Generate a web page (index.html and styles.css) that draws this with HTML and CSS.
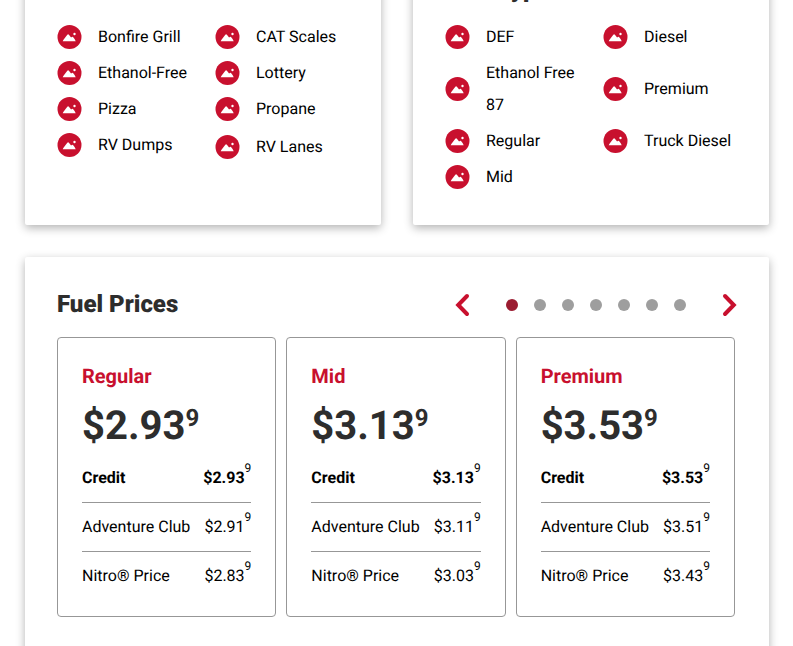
FILE: index.html
```html
<!DOCTYPE html>
<html lang="en">
<head>
<meta charset="utf-8">
<title>Fuel Prices</title>
<link rel="stylesheet" href="styles.css">
</head>
<body>
<svg class="sprite" aria-hidden="true">
  <symbol id="pic" viewBox="0 0 24 24">
    <circle cx="12" cy="12" r="12" fill="#c8102e"/>
    <path d="M5.2 16.2 Q5.4 15.4 6.2 14.4 L9.8 9.7 Q10.6 8.9 11.4 9.7 L13.6 12.6 L14.3 11.9 Q14.9 11.4 15.5 12 Q17.4 14 18.2 16.2 Z" fill="#fff"/>
    <circle cx="17" cy="9" r="1.2" fill="#fff"/>
  </symbol>
</svg>
<main class="page">
  <div class="pair">
    <section class="card card-top">
      <ul class="features">
        <li><svg class="icon"><use href="#pic"/></svg><span>Bonfire Grill</span></li>
        <li><svg class="icon"><use href="#pic"/></svg><span>CAT Scales</span></li>
        <li><svg class="icon"><use href="#pic"/></svg><span>Ethanol-Free</span></li>
        <li><svg class="icon"><use href="#pic"/></svg><span>Lottery</span></li>
        <li><svg class="icon"><use href="#pic"/></svg><span>Pizza</span></li>
        <li><svg class="icon"><use href="#pic"/></svg><span>Propane</span></li>
        <li><svg class="icon"><use href="#pic"/></svg><span>RV Dumps</span></li>
        <li><svg class="icon"><use href="#pic"/></svg><span>RV Lanes</span></li>
      </ul>
    </section>
    <section class="card card-top">
      <h2 class="title">Fuel Types</h2>
      <ul class="features">
        <li><svg class="icon"><use href="#pic"/></svg><span>DEF</span></li>
        <li><svg class="icon"><use href="#pic"/></svg><span>Diesel</span></li>
        <li><svg class="icon"><use href="#pic"/></svg><span>Ethanol Free 87</span></li>
        <li><svg class="icon"><use href="#pic"/></svg><span>Premium</span></li>
        <li><svg class="icon"><use href="#pic"/></svg><span>Regular</span></li>
        <li><svg class="icon"><use href="#pic"/></svg><span>Truck Diesel</span></li>
        <li><svg class="icon"><use href="#pic"/></svg><span>Mid</span></li>
      </ul>
    </section>
  </div>

  <section class="card prices">
    <header class="prices-head">
      <h2 class="title">Fuel Prices</h2>
      <nav class="pager" aria-label="Fuel prices">
        <button class="arrow" type="button" aria-label="Previous"><svg viewBox="0 0 14 24"><path d="M11.5 3 L2.7 12 L11.5 21"/></svg></button>
        <div class="dots">
          <button class="dot active" type="button" aria-label="Slide 1"></button>
          <button class="dot" type="button" aria-label="Slide 2"></button>
          <button class="dot" type="button" aria-label="Slide 3"></button>
          <button class="dot" type="button" aria-label="Slide 4"></button>
          <button class="dot" type="button" aria-label="Slide 5"></button>
          <button class="dot" type="button" aria-label="Slide 6"></button>
          <button class="dot" type="button" aria-label="Slide 7"></button>
        </div>
        <button class="arrow" type="button" aria-label="Next"><svg viewBox="0 0 14 24"><path d="M2.5 3 L11.3 12 L2.5 21"/></svg></button>
      </nav>
    </header>
    <div class="slides">
      <article class="slide">
        <h3 class="grade">Regular</h3>
        <p class="big">$2.93<sup>9</sup></p>
        <table class="rates">
          <tr class="credit"><th scope="row">Credit</th><td>$2.93<sup>9</sup></td></tr>
          <tr><th scope="row">Adventure Club</th><td>$2.91<sup>9</sup></td></tr>
          <tr><th scope="row">Nitro® Price</th><td>$2.83<sup>9</sup></td></tr>
        </table>
      </article>
      <article class="slide">
        <h3 class="grade">Mid</h3>
        <p class="big">$3.13<sup>9</sup></p>
        <table class="rates">
          <tr class="credit"><th scope="row">Credit</th><td>$3.13<sup>9</sup></td></tr>
          <tr><th scope="row">Adventure Club</th><td>$3.11<sup>9</sup></td></tr>
          <tr><th scope="row">Nitro® Price</th><td>$3.03<sup>9</sup></td></tr>
        </table>
      </article>
      <article class="slide">
        <h3 class="grade">Premium</h3>
        <p class="big">$3.53<sup>9</sup></p>
        <table class="rates">
          <tr class="credit"><th scope="row">Credit</th><td>$3.53<sup>9</sup></td></tr>
          <tr><th scope="row">Adventure Club</th><td>$3.51<sup>9</sup></td></tr>
          <tr><th scope="row">Nitro® Price</th><td>$3.43<sup>9</sup></td></tr>
        </table>
      </article>
    </div>
  </section>
</main>
</body>
</html>
```
FILE: styles.css
```css
* { box-sizing: border-box; }

body {
  margin: 0;
  overflow: hidden;
  background: #fff;
  color: #000;
  font: 16px/24px Roboto, "Liberation Sans", sans-serif;
  text-rendering: geometricPrecision;
}

h2, h3, p, ul { margin: 0; padding: 0; }

.sprite { display: none; }

/* The page is scrolled part way down the first row of cards. */
.page {
  display: flex;
  flex-direction: column;
  gap: 32px;
  margin-top: -59px;
  padding: 0 24px 0 25px;
}

.pair {
  display: grid;
  grid-template-columns: 1fr 1fr;
  gap: 32px;
}

.card {
  padding: 32px;
  border-radius: 2px;
  background: #fff;
  box-shadow: 0 3px 10px rgba(0, 0, 0, 0.3);
}

.card-top .features { padding-top: 16px; }
.card-top .features:first-child { padding-top: 48px; }

.title {
  color: #2d2d2d;
  font-size: 24px;
  line-height: 30px;
  font-weight: 900;
}

.card-top .title { line-height: 32px; }

.features {
  display: grid;
  grid-template-columns: 1fr 1fr;
  column-gap: 24px;
  line-height: 32px;
  list-style: none;
}

.features li {
  display: flex;
  align-items: center;
  gap: 16px;
  margin-bottom: 4px;
}

.features li:last-child { margin-bottom: 0; }

.icon {
  flex: none;
  width: 25px;
  height: 24px;
}

.prices { padding-bottom: 64px; }

.prices-head {
  display: flex;
  justify-content: space-between;
  align-items: flex-start;
  margin-bottom: 16px;
}

.pager,
.dots {
  display: flex;
  align-items: center;
}

.pager {
  gap: 36px;
  height: 32px;
}

.dots { gap: 16px; }

.arrow {
  width: 15px;
  height: 24px;
  padding: 0;
  border: 0;
  background: none;
}

.arrow svg {
  display: block;
  width: 100%;
  height: 100%;
  fill: none;
  stroke: #c8102e;
  stroke-width: 4;
  stroke-linecap: round;
}

.dot {
  width: 12px;
  height: 12px;
  padding: 0;
  border: 0;
  border-radius: 50%;
  background: #9e9e9e;
}

.dot.active { background: #9b1c31; }

.slides {
  display: grid;
  grid-template-columns: repeat(3, 1fr);
  gap: 10px;
  padding-right: 2px;
}

.slide {
  padding: 24px;
  border: 1px solid #979797;
  border-radius: 4px;
}

.grade {
  color: #c8102e;
  font-size: 20px;
  line-height: 28px;
}

.big {
  margin-top: 8px;
  color: #2d2d2d;
  font-size: 40px;
  line-height: 56px;
  font-weight: 700;
}

.big sup {
  font-size: 24px;
  line-height: 0;
  vertical-align: 13px;
}

.rates {
  width: 100%;
  border-collapse: collapse;
}

.rates th,
.rates td {
  padding: 12px 0;
  font-weight: 400;
  text-align: left;
  white-space: nowrap;
}

.rates td { text-align: right; }

.rates tr + tr { border-top: 1px solid #979797; }

.rates .credit th,
.rates .credit td { font-weight: 700; }

.rates tr:last-child th,
.rates tr:last-child td { padding-bottom: 4px; }

.rates sup {
  font-size: 12px;
  line-height: 0;
  font-weight: 400;
  vertical-align: 11px;
}
```
